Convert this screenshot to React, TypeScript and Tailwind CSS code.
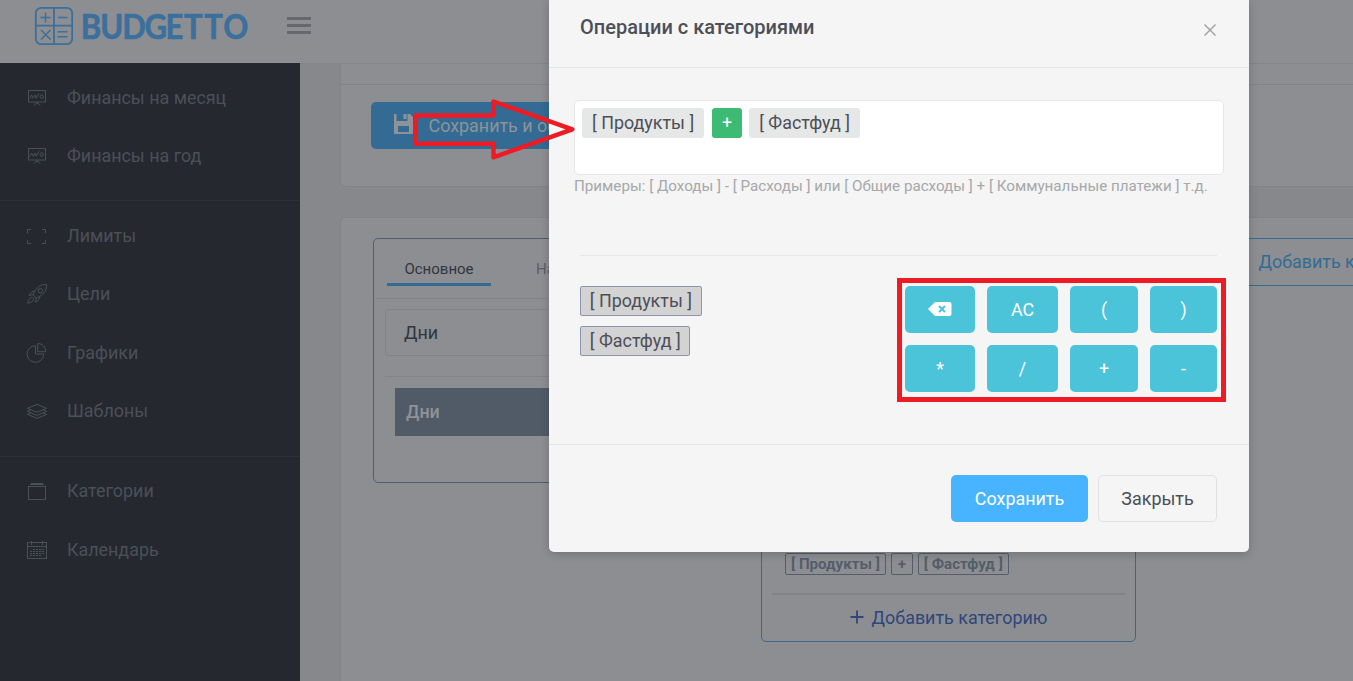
import type { ReactNode } from "react";

const stroke = { fill: "none", stroke: "currentColor", strokeWidth: 1 } as const;

function BoardIcon() {
  return (
    <svg className="h-[22px] w-[22px]" viewBox="0 0 22 22" {...stroke}>
      <rect x="2.5" y="3.5" width="17" height="11.5" />
      <path d="M3.8 11.5 5.6 8l1.4 3.2L9 8l1.2 3.3 2.6-5M11 15v1.5M8 18.5c.8-1.4 1.6-1.9 3-1.9s2.4.5 3.2 1.9" />
      <circle cx="15.8" cy="9.6" r="1.7" />
    </svg>
  );
}

function FrameIcon() {
  return (
    <svg className="mt-[2px] h-[22px] w-[22px]" viewBox="0 0 22 22" {...stroke}>
      <path d="M1.5 7.2V3.5h3.7M16 3.5h3.5v3.7M1.5 14.2v3.3h3.7M16 17.5h3.5v-3.3" />
    </svg>
  );
}

function RocketIcon() {
  return (
    <svg className="h-[22px] w-[22px]" viewBox="0 0 22 22" {...stroke}>
      <path d="M20.5 1.5c-5.3-.2-8.3 1.5-12 7.2l-1.3 3.200 3 3 3.300-1.200c5.500-3.900 7.200-6.900 7-12.200z" />
      <circle cx="14.3" cy="7.8" r="2.2" />
      <path d="M9 8.200c-2.800-.1-4.600 1.500-6 4.600 1.500-.8 2.900-1.100 4.200-.9M13.800 13.200c.1 2.800-1.500 4.600-4.600 6 .8-1.500 1.200-2.900 1-4.200M5.800 14.200c-2.200.6-3.300 3-4.100 6.100 3.100-.7 5.500-1.900 6-4.100" />
      <path d="M5.800 14.200c1.200.2 1.900 1 1.900 2" />
    </svg>
  );
}

function PieIcon() {
  return (
    <svg className="h-[22px] w-[22px]" viewBox="0 0 22 22" {...stroke}>
      <path d="M9.500 3.700a8.300 8.300 0 1 0 8.200 8.300H9.500z" />
      <path d="M11.700 1.500v8.200h8c0-4.800-3.300-8.200-8-8.200z" />
    </svg>
  );
}

function LayersIcon() {
  return (
    <svg className="h-[22px] w-[22px]" viewBox="0 0 22 22" {...stroke}>
      <path d="M1.500 8.300 11 4.400l9.500 3.900L11 12.300z" />
      <path d="m4.500 10.100-3 1.300 9.500 4 9.500-4-3-1.300M4.500 13.100l-3 1.300 9.500 4 9.500-4-3-1.300" />
    </svg>
  );
}

function BoxIcon() {
  return (
    <svg className="h-[22px] w-[22px]" viewBox="0 0 22 22" {...stroke}>
      <rect x="2.5" y="6.5" width="17" height="13" />
      <path d="M4.500 4.500 5.200 3.500h11.600l.7 1M4 4.500h14" />
    </svg>
  );
}

function CalendarIcon() {
  return (
    <svg className="h-[22px] w-[22px]" viewBox="0 0 22 22" {...stroke}>
      <rect x="1.5" y="3.5" width="19" height="16" />
      <path d="M1.500 7.500h19M5.500 2v4M16.500 2v4" />
      <path d="M7 10.500h11M4 12.500h14M4 14.500h14M4 16.500h11" strokeDasharray="2.2 0.8" />
    </svg>
  );
}

function NavItem({ icon, label }: { icon: ReactNode; label: string }) {
  return (
    <div className="flex h-[58.5px] items-center pl-[26px]">
      {icon}
      <span className="ml-[19px] text-[17.9px] leading-6">{label}</span>
    </div>
  );
}

function Header() {
  return (
    <header className="flex h-16 shrink-0 border-b border-[#838488] bg-[#8c8e92]">
      <svg className="h-[56px] w-[260px]" viewBox="0 0 260 56">
        <g fill="none" stroke="#3b6f9c" strokeWidth="1.8">
          <rect x="35.8" y="7.8" width="36.4" height="36.4" rx="5.5" />
          <path d="M54 8v36M36 25.700h36" />
          <path
            strokeWidth="1.5"
            d="M40.500 17.500h10M45.500 12.500v10M58 17.500h9.500M41 30l9.500 9.500M50.500 30 41 39.500M57.500 31.800h10M57.500 36.800h10"
          />
        </g>
        <text
          transform="scale(0.9 1)"
          x="89.8 111.3 135.8 160.5 183.9 204.4 226.9 248.2"
          y="38.8"
          className="fill-[#3b6f9c] stroke-[#3b6f9c] font-['Lato',sans-serif] text-[34.5px] font-bold"
          strokeWidth="0.6"
          strokeLinejoin="round"
        >
          BUDGETTO
        </text>
      </svg>
      <div className="mt-[17px] ml-[27px] flex w-6 flex-col gap-1">
        <span className="h-[3px] bg-[#66676f]" />
        <span className="h-[3px] bg-[#66676f]" />
        <span className="h-[3px] bg-[#66676f]" />
      </div>
    </header>
  );
}

function Sidebar() {
  return (
    <nav className="-mt-px w-[300px] shrink-0 bg-[#25282f] text-[#4b5057]">
      <div className="h-[138px] border-b border-[#2c3037] pt-[5.6px]">
        <NavItem icon={<BoardIcon />} label="Финансы на месяц" />
        <NavItem icon={<BoardIcon />} label="Финансы на год" />
      </div>
      <div className="h-[256px] border-b border-[#2c3037] pt-[5.6px]">
        <NavItem icon={<FrameIcon />} label="Лимиты" />
        <NavItem icon={<RocketIcon />} label="Цели" />
        <NavItem icon={<PieIcon />} label="Графики" />
        <NavItem icon={<LayersIcon />} label="Шаблоны" />
      </div>
      <div className="pt-[5px]">
        <NavItem icon={<BoxIcon />} label="Категории" />
        <NavItem icon={<CalendarIcon />} label="Календарь" />
      </div>
    </nav>
  );
}

function SmallTag({ children }: { children: ReactNode }) {
  return (
    <span className="flex h-[22px] min-w-[22px] items-center justify-center rounded-[2px] border border-[#545e6b] px-[5px] text-[15.1px] leading-5 font-bold text-[#545e6b]">
      {children}
    </span>
  );
}

function Board() {
  return (
    <main className="w-[1053px] shrink-0 pl-10">
      <section className="h-[123px] w-[1100px] rounded-b-[5px] border-x border-b border-[#828387] bg-[#8c8e92]">
        <div className="h-[21px] border-b border-[#828387]" />
        <button className="mt-[17px] ml-[30px] flex h-[47px] w-[260px] items-center rounded-[5px] bg-[#336b94] pl-[23px] text-[17.9px] leading-[27px] whitespace-nowrap text-[#8f9398]">
          <svg className="-mt-[3px] h-5 w-[19px]" viewBox="0 0 19 20">
            <path
              fill="currentColor"
              fillRule="evenodd"
              d="M1 0h1.500v7h11V0H16l3 3v16.500a.5.500 0 0 1-.5.500H.5a.5.500 0 0 1-.5-.500V1a1 1 0 0 1 1-1zM4 12v6h11v-6zM9.500 0h3v5h-3z"
            />
          </svg>
          <span className="ml-[15.5px]">Сохранить и об</span>
        </button>
      </section>
      <section className="mt-[30px] flex h-[500px] w-[1100px] items-start gap-[13px] rounded-t-[5px] border border-[#828387] bg-[#8c8e92] pt-5 pl-8">
        <div className="h-[245px] w-[375px] shrink-0 rounded-[5px] border border-[#545e6b]">
          <div className="ml-px flex h-[60px] border-b border-[#828387] pl-3 text-[15px] leading-5">
            <div className="mt-5 flex h-[27px] w-[104px] justify-center border-b-[3px] border-[#336b94] text-[#32353e]">
              Основное
            </div>
            <div className="mt-5 ml-[45px] text-[#5b5e66]">На</div>
          </div>
          <div className="mt-[10px] ml-[11px] flex h-[47px] w-[350px] items-center rounded-[4px] border border-[#828387] pl-[18px] text-[17.9px] leading-[27px] text-[#32353e]">
            Дни
          </div>
          <div className="mt-5 ml-[11px] w-[350px] border-b border-[#828387]" />
          <div className="mt-[11px] ml-[21px] flex h-12 w-[330px] items-center bg-[#515b67] pl-[11px] text-[17.9px] font-medium text-[#8f9297]">
            Дни
          </div>
        </div>
        <div className="flex h-[404px] w-[375px] shrink-0 flex-col rounded-[5px] border border-[#3c678b] px-[10px]">
          <div className="mt-[314px] ml-[13px] flex gap-[5px]">
            <SmallTag>[ Продукты ]</SmallTag>
            <SmallTag>+</SmallTag>
            <SmallTag>[ Фастфуд ]</SmallTag>
          </div>
          <div className="mt-[18px] h-[2px] bg-[#828387]" />
          <div className="flex h-[47px] items-center justify-center gap-2 text-[17.9px] text-[#2f4679]">
            <svg className="-mt-[2px] h-[14px] w-[14px]" viewBox="0 0 14 14" fill="none" stroke="currentColor" strokeWidth="1.8">
              <path d="M7 .5v13M.5 7h13" />
            </svg>
            <span>Добавить категорию</span>
          </div>
        </div>
        <div className="flex h-12 w-[375px] shrink-0 items-center rounded-[5px] border border-[#336b94] pl-[108.5px] text-[17.9px] leading-[28px] whitespace-nowrap text-[#336b94]">
          Добавить категорию
        </div>
      </section>
    </main>
  );
}

function KeyButton({ children }: { children: ReactNode }) {
  return (
    <button className="flex items-center justify-center rounded-[5px] bg-[#4bc3d8] text-[17.9px] leading-6 text-white">
      {children}
    </button>
  );
}

function PickTag({ children }: { children: ReactNode }) {
  return (
    <span className="flex h-[30px] items-center rounded-[2px] border border-[#8a97ae] bg-[#d3d3d3] px-[8.8px] text-[17.9px] text-[#4c4f57]">
      {children}
    </span>
  );
}

function Modal() {
  return (
    <div className="absolute top-0 left-[549px] h-[552px] w-[700px] rounded-b-[5px] bg-[#f5f5f5] shadow-[0_2px_10px_rgba(0,0,0,0.2)]">
      <div className="flex h-[68px] justify-between border-b border-[#e4e5e5] pr-[33px] pl-[31px]">
        <h2 className="mt-[14px] text-[20px] leading-[26px] font-medium text-[#4c4f57]">Операции с категориями</h2>
        <svg className="mt-6 h-3 w-3" viewBox="0 0 12 12" fill="none" stroke="#a3a4a6" strokeWidth="1.5">
          <path d="m.5.500 11 11M11.500.5l-11 11" />
        </svg>
      </div>
      <div className="flex h-[377px] flex-col border-b border-[#e4e5e5] pt-8 pr-[25px] pl-[25px]">
        <div className="flex h-[75px] items-start rounded-[5px] border border-[#e6e7e7] bg-white pt-[7px] pl-[7px] text-[17.9px] text-[#4c4f57]">
          <span className="flex h-[30px] items-center rounded-[3px] bg-[#e6e8e7] px-[10px]">[ Продукты ]</span>
          <span className="ml-2 flex h-[30px] w-[30px] items-center justify-center rounded-[3px] bg-[#3dbb75] text-white">
            +
          </span>
          <span className="ml-[7px] flex h-[30px] items-center rounded-[3px] bg-[#e6e8e7] px-[10px]">[ Фастфуд ]</span>
        </div>
        <p className="text-[15.18px] leading-[22px] whitespace-nowrap text-[#a6a8aa]">
          Примеры: [ Доходы ] - [ Расходы ] или [ Общие расходы ] + [ Коммунальные платежи ] т.д.
        </p>
        <div className="mt-[58px] mr-[7px] ml-[6px] h-px shrink-0 bg-[#e6e7e7]" />
        <div className="mt-[30px] mr-[7px] ml-[6px] flex items-start justify-between">
          <div className="flex flex-col items-start gap-[10px]">
            <PickTag>[ Продукты ]</PickTag>
            <PickTag>[ Фастфуд ]</PickTag>
          </div>
          <div className="grid grid-cols-[70px_71px_68px_67px] grid-rows-[47px_47px] gap-3">
            <KeyButton>
              <svg className="-mt-[1px] h-[14px] w-6" viewBox="0 0 24 14">
                <path fill="white" d="M0 7 6 .9Q6.900 0 8 0h13.500Q23.500 0 23.500 2v10q0 2-2 2H8q-1.100 0-2-.9z" />
                <path d="m11 4 6 6M17 4l-6 6" stroke="#4bc3d8" strokeWidth="1.9" />
              </svg>
            </KeyButton>
            <KeyButton>AC</KeyButton>
            <KeyButton>(</KeyButton>
            <KeyButton>)</KeyButton>
            <KeyButton>*</KeyButton>
            <KeyButton>/</KeyButton>
            <KeyButton>+</KeyButton>
            <KeyButton>-</KeyButton>
          </div>
        </div>
      </div>
      <div className="flex justify-end gap-[10px] pt-[30px] pr-8 text-[17.9px] leading-[27px]">
        <button className="h-[47px] w-[137px] rounded-[5px] bg-[#48b4ff] text-white">Сохранить</button>
        <button className="h-[47px] w-[119px] rounded-[5px] border border-[#e0e1e1] text-[#4c4f57]">Закрыть</button>
      </div>
    </div>
  );
}

function Annotations() {
  return (
    <>
      <svg
        className="absolute top-[95px] left-[410px] h-[68px] w-[168px]"
        viewBox="410 95 168 68"
        fill="none"
        stroke="#ed1c24"
        strokeWidth="4.5"
      >
        <path d="M415.200 115.500H493.500V101.500L572.300 129.300 493.500 157.300V143.700H415.200z" strokeLinejoin="round" />
      </svg>
      <div className="absolute top-[278px] left-[897px] h-[124px] w-[329px] border-[5px] border-[#ed1c24]" />
    </>
  );
}

export default function App() {
  return (
    <div className="relative flex h-[681px] w-[1353px] flex-col overflow-hidden bg-[#87888b] font-['Roboto',sans-serif]">
      <Header />
      <div className="flex min-h-0 flex-1">
        <Sidebar />
        <Board />
      </div>
      <Modal />
      <Annotations />
    </div>
  );
}
